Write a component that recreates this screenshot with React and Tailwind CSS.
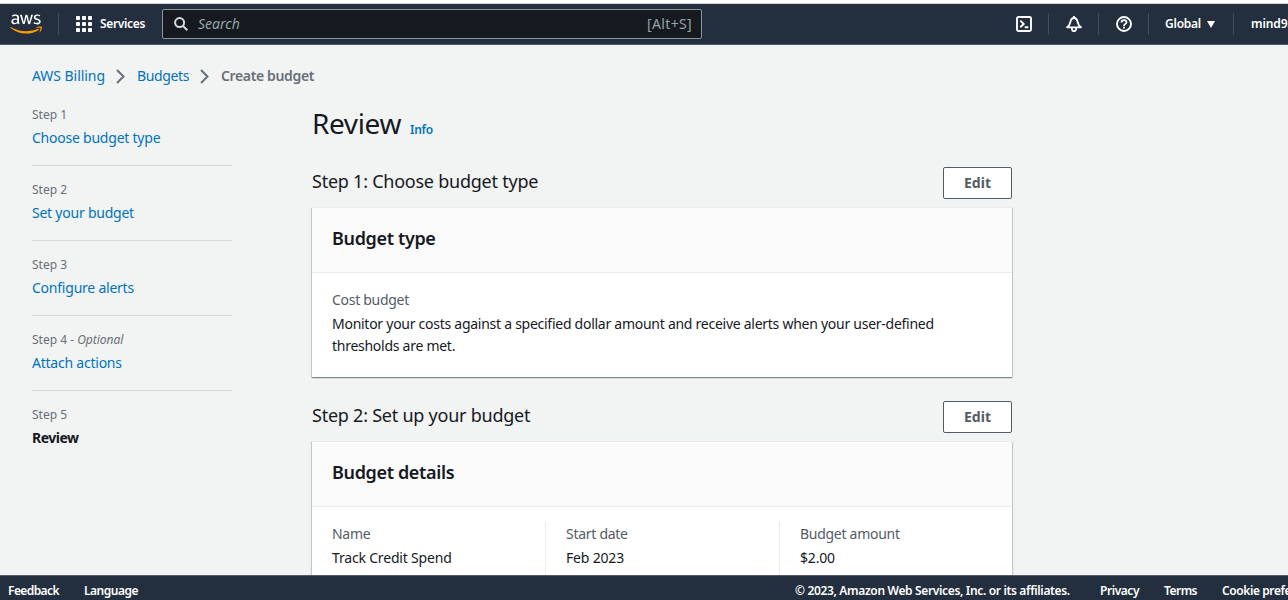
import React from "react";
import { FaAws } from "react-icons/fa";

const Divider = () => <div className="h-[22px] w-px shrink-0 bg-[#414d5c]" />;

function AwsLogo() {
  return (
    <div className="relative ml-[10px] h-[26px] w-8 shrink-0">
      <FaAws className="absolute inset-0 h-[26px] w-8 text-white [clip-path:inset(0_0_45%_0)]" />
      <FaAws className="absolute inset-0 h-[26px] w-8 text-[#ff9900] [clip-path:inset(55%_0_0_0)]" />
    </div>
  );
}

function GridIcon() {
  const cells = [0, 6, 12];
  return (
    <svg width="16" height="16" viewBox="0 0 16 16" fill="#fff" className="shrink-0">
      {cells.map((y) => cells.map((x) => <rect key={`${x}-${y}`} x={x} y={y} width="4" height="4" rx="0.7" />))}
    </svg>
  );
}

function Header() {
  return (
    <header className="flex h-[41px] shrink-0 items-center overflow-hidden border-b border-[#545b64] bg-[#232f3e] whitespace-nowrap text-white">
      <AwsLogo />
      <div className="ml-4 flex items-center">
        <Divider />
        <div className="ml-[17px] flex items-center">
          <GridIcon />
          <span className="ml-2 w-[46px] text-xs font-semibold tracking-[-0.34px]">Services</span>
        </div>
      </div>
      <div className="ml-4 flex h-[30px] w-[540px] shrink-0 items-center rounded-[2px] border border-[#879596] bg-[#16191f] pr-[9px] pl-[11px] text-sm text-[#95a5a6]">
        <svg width="14" height="14" viewBox="0 0 14 14" fill="none" stroke="#d5dbdb" strokeWidth="2" className="shrink-0">
          <circle cx="5.6" cy="5.6" r="4.5" />
          <path d="M8.9 8.9l4.4 4.4" />
        </svg>
        <span className="ml-[10px] italic">Search</span>
        <span className="ml-auto tracking-[0.35px]">[Alt+S]</span>
      </div>
      <div className="ml-[314px] flex shrink-0 items-center">
        <svg width="16" height="16" viewBox="0 0 16 16" fill="none" stroke="#fff" strokeWidth="1.9" className="shrink-0">
          <rect x="1" y="1" width="14" height="14" rx="1.5" />
          <path d="M4.3 4.6L7.7 7.9 4.3 11.2M8.7 11.2h3.6" />
        </svg>
        <div className="ml-4"><Divider /></div>
        <svg width="16" height="16" viewBox="0 0 16 16" fill="none" stroke="#fff" strokeWidth="1.8" strokeLinejoin="round" className="ml-[17px] shrink-0">
          <path d="M1 11.300h14c-1.900-1.200-2.800-2.600-3.300-5C11.200 3.500 10 2 8 2S4.800 3.500 4.300 6.300c-.5 2.400-1.400 3.800-3.300 5z" />
          <path d="M5.900 12v1.100a2.100 2.100 0 0 0 4.200 0V12" />
          <path d="M8 0v2" />
        </svg>
        <div className="ml-4"><Divider /></div>
        <svg width="16" height="16" viewBox="0 0 16 16" fill="none" stroke="#fff" strokeWidth="1.9" className="ml-[17px] shrink-0">
          <circle cx="8" cy="8" r="7" />
          <path d="M5.500 6.500C5.500 4.900 6.500 4.100 8 4.100s2.500.8 2.500 2.100c0 1.700-2.500 1.700-2.500 3.700M8 10.800v1.800" strokeWidth="1.800" />
        </svg>
        <div className="ml-4"><Divider /></div>
        <span className="ml-4 w-[37px] text-xs font-semibold tracking-[-0.24px]">Global</span>
        <svg width="8" height="7" viewBox="0 0 8 7" fill="#fff" className="ml-[5px] shrink-0"><path d="M0 0h8L4 7z" /></svg>
        <div className="ml-[18px]"><Divider /></div>
        <span className="ml-[17px] text-xs font-semibold tracking-[-0.1px]">mind98</span>
      </div>
    </header>
  );
}

const Chevron = () => (
  <svg width="9" height="15" viewBox="0 0 9 15" fill="none" stroke="#687078" strokeWidth="2" className="shrink-0">
    <path d="M1 1l6.500 6.500L1 14" />
  </svg>
);

const steps = [
  { id: "Step 1", label: "Choose budget type" },
  { id: "Step 2", label: "Set your budget" },
  { id: "Step 3", label: "Configure alerts" },
  { id: "Step 4", label: "Attach actions", optional: true },
  { id: "Step 5", label: "Review", current: true },
];

function Steps() {
  return (
    <nav className="w-[200px] shrink-0 whitespace-nowrap">
      {steps.map((s) => (
        <div key={s.id} className="mb-[14px] border-b border-[#d5dbdb] pb-4 last:border-0">
          <div className="text-xs leading-5 text-[#687078]">
            {s.id}
            {s.optional && <span> - <i>Optional</i></span>}
          </div>
          <div className={s.current ? "mt-0.5 text-sm leading-[22px] font-bold tracking-[-0.5px] text-[#16191f]" : "mt-0.5 text-sm leading-[22px] tracking-[-0.23px] text-[#0073bb]"}>
            {s.label}
          </div>
        </div>
      ))}
    </nav>
  );
}

function SectionHeader({ title }) {
  return (
    <div className="flex h-8 items-center justify-between">
      <h2 className="-mt-1 text-lg leading-[22px] tracking-[-0.24px]">{title}</h2>
      <button className="h-8 w-[69px] rounded-[2px] border border-[#545b64] bg-white text-sm font-bold text-[#545b64]">Edit</button>
    </div>
  );
}

function Card({ title, children }) {
  return (
    <section className="mt-2 bg-white shadow-[0_1px_1px_0_rgba(0,28,36,0.3),1px_1px_1px_0_rgba(0,28,36,0.15),-1px_1px_1px_0_rgba(0,28,36,0.15)]">
      <div className="flex h-[66px] items-center border-y border-[#eaeded] bg-[#fafafa] px-5">
        <h3 className="-mt-1 text-lg font-semibold tracking-[-0.35px]">{title}</h3>
      </div>
      {children}
    </section>
  );
}

const details = [
  ["Name", "Track Credit Spend", "w-[213px]"],
  ["Start date", "Feb 2023", "w-[234px] border-l border-[#eaeded] pl-5"],
  ["Budget amount", "$2.00", "w-[213px] border-l border-[#eaeded] pl-5"],
];

export default function App() {
  return (
    <div className="flex h-[600px] flex-col overflow-hidden bg-[#f2f3f3] font-['Noto_Sans',sans-serif] text-[#16191f]">
      <div className="h-[3px] shrink-0 bg-white" />
      <div className="h-px shrink-0 bg-[#d5d6d8]" />
      <Header />
      <div className="min-h-0 flex-1 overflow-hidden">
        <div className="ml-8 flex h-[62px] items-center text-sm whitespace-nowrap">
          <span className="w-[73px] tracking-[-0.05px] text-[#0073bb]">AWS Billing</span>
          <div className="ml-[11px]"><Chevron /></div>
          <span className="ml-3 w-[52px] tracking-[-0.38px] text-[#0073bb]">Budgets</span>
          <div className="ml-[11px]"><Chevron /></div>
          <span className="ml-3 font-semibold tracking-[-0.36px] text-[#687078]">Create budget</span>
        </div>
        <div className="-mt-0.5 ml-8 flex">
          <Steps />
          <main className="ml-20 w-[700px] shrink-0">
            <div className="-mt-px mb-px flex h-[62px] items-baseline">
              <h1 className="text-[28px] leading-[38px] tracking-[-0.39px]">Review</h1>
              <a className="ml-[9px] text-xs font-semibold tracking-[-0.3px] text-[#0073bb]">Info</a>
            </div>
            <SectionHeader title="Step 1: Choose budget type" />
            <Card title="Budget type">
              <div className="h-[104px] px-5 pt-4 text-sm leading-[22px]">
                <div className="tracking-[-0.29px] text-[#545b64]">Cost budget</div>
                <p className="mt-0.5 tracking-[-0.265px] whitespace-nowrap">
                  Monitor your costs against a specified dollar amount and receive alerts when your user-defined
                  <br />
                  thresholds are met.
                </p>
              </div>
            </Card>
            <div className="h-6" />
            <SectionHeader title="Step 2: Set up your budget" />
            <Card title="Budget details">
              <div className="flex h-[150px] px-5 pt-[15px] text-sm leading-[22px]">
                {details.map(([label, value, cls]) => (
                  <div key={label} className={`shrink-0 ${cls}`}>
                    <div className="mt-px tracking-[-0.28px] text-[#545b64]">{label}</div>
                    <div className="mt-0.5 tracking-[-0.18px]">{value}</div>
                  </div>
                ))}
              </div>
            </Card>
          </main>
        </div>
      </div>
      <footer className="flex h-[25px] shrink-0 items-center overflow-hidden border-t border-[#545b64] bg-[#232f3e] pt-[5px] pl-2 text-xs font-semibold whitespace-nowrap text-white">
        <span className="w-[76px] shrink-0 tracking-[-0.58px]">Feedback</span>
        <span className="w-[54px] shrink-0 tracking-[-0.49px]">Language</span>
        <span className="ml-[657px] w-[305px] shrink-0 tracking-[-0.34px]">© 2023, Amazon Web Services, Inc. or its affiliates.</span>
        <span className="w-[64px] shrink-0 tracking-[-0.45px]">Privacy</span>
        <span className="w-[58px] shrink-0 tracking-[-0.53px]">Terms</span>
        <span className="tracking-[-0.4px]">Cookie preferences</span>
      </footer>
    </div>
  );
}
